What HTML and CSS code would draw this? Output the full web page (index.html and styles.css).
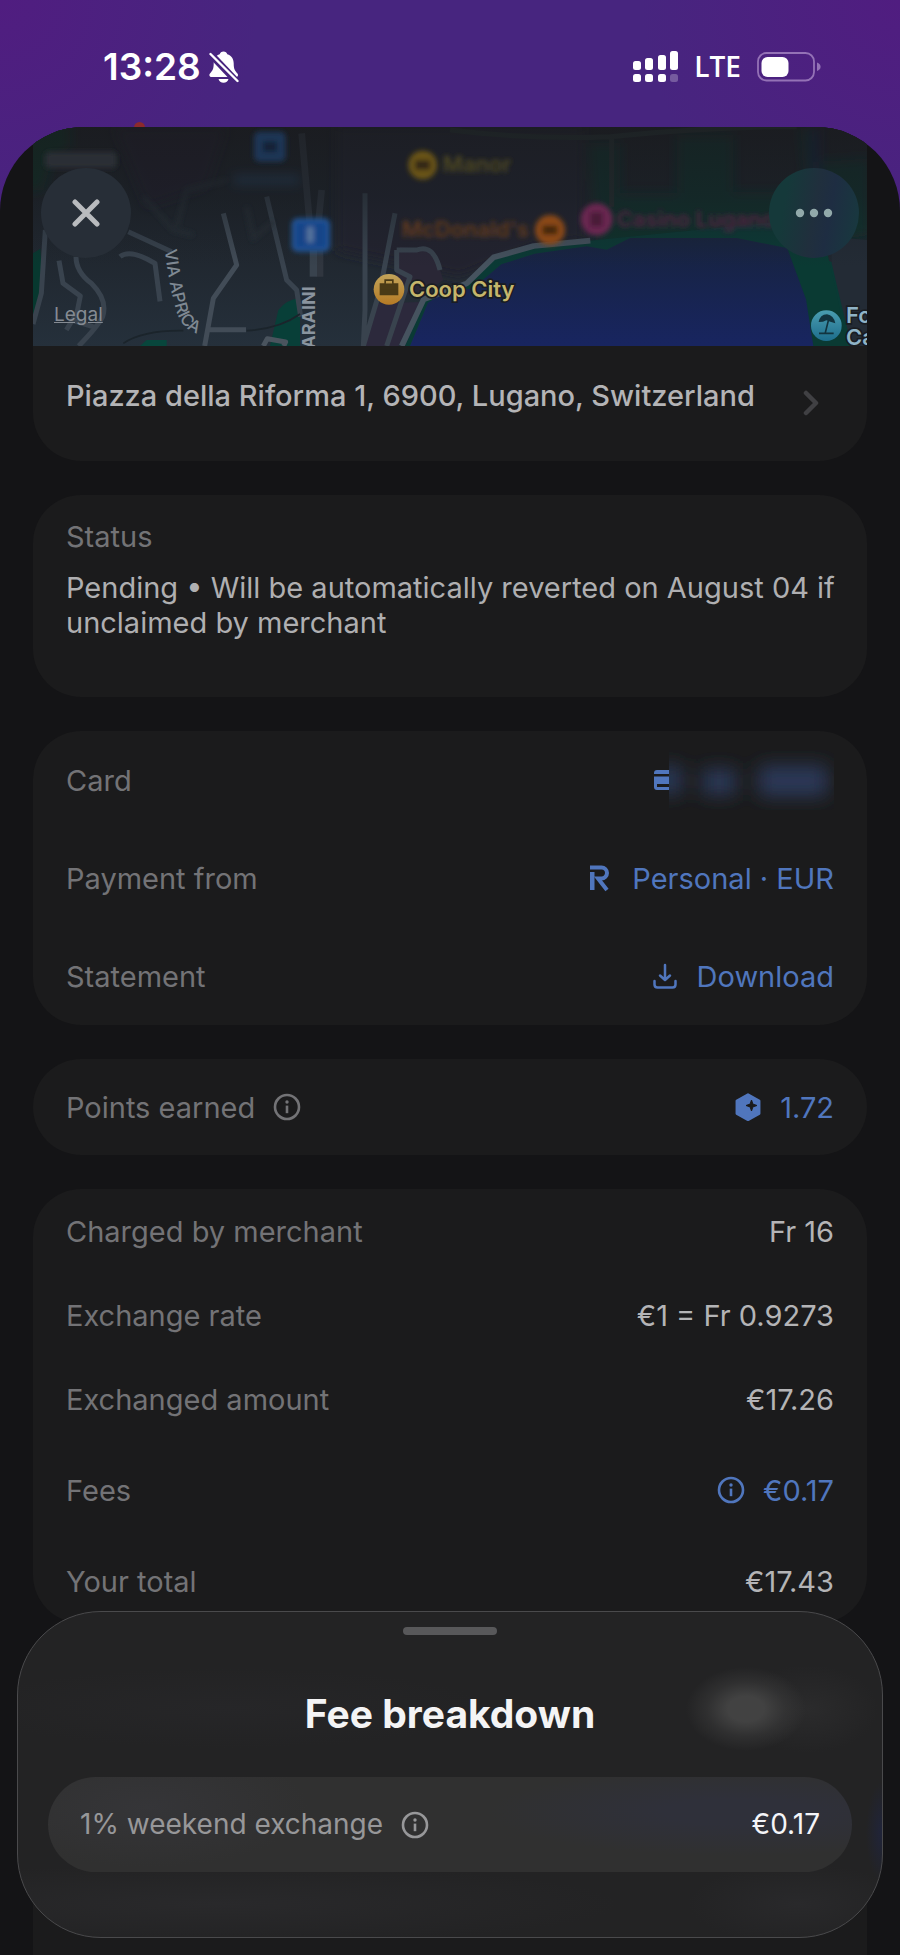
FILE: index.html
```html
<!DOCTYPE html>
<html lang="en">
<head>
	<meta charset="utf-8">
	<meta name="viewport" content="width=device-width, initial-scale=1">
	<title>Transaction details</title>
	<link rel="stylesheet" href="styles.css">
</head>
<body>
	<!-- Shared icons -->
	<svg class="defs" aria-hidden="true">
		<symbol id="info" viewBox="0 0 28 28">
			<circle cx="14" cy="14" r="12" fill="none" stroke="currentColor" stroke-width="2.6"/>
			<circle cx="14" cy="9" r="1.7" fill="currentColor"/>
			<path d="M14 12.6v7.6" stroke="currentColor" stroke-width="2.6"/>
		</symbol>
	</svg>

	<header class="statusbar">
		<div class="group time">
			<span>13:28</span>
			<svg width="30" height="32" viewBox="0 0 30 32" aria-hidden="true">
				<mask id="cut"><rect width="30" height="32" fill="#fff"/><path d="M0 1.5L28 31" stroke="#000" stroke-width="7"/></mask>
				<g fill="#fff" mask="url(#cut)">
					<path d="M14.5 0.5c2 0 3.4 1.2 3.8 2.8 4 1.2 6.4 4.6 6.4 9 0 6 1.3 7.5 3.3 9.7.9 1 1.2 1.7.9 2.7-.3.9-1 1.3-2.2 1.3H2.8c-1.3 0-2-.5-2.3-1.3-.3-1 0-1.7.9-2.7 2-2.2 3.3-3.7 3.3-9.7 0-4.4 2.2-7.8 6-9 .4-1.6 1.8-2.8 3.8-2.8z"/>
					<path d="M9.5 28h10c-.5 2.2-2.5 3.7-5 3.7s-4.5-1.500-5-3.700z"/>
				</g>
				<path d="M1.5 3L28.5 30" stroke="#fff" stroke-width="2.4" stroke-linecap="round"/>
			</svg>
		</div>
		<div class="group signal">
			<svg width="45" height="31" viewBox="0 0 45 31" fill="#fff" aria-hidden="true">
				<rect x="0" y="10" width="8" height="9" rx="2.5"/>
				<rect x="12" y="7" width="8" height="12" rx="2.5"/>
				<rect x="25" y="4" width="8" height="15" rx="2.5"/>
				<rect x="37" y="0" width="8" height="19" rx="2.5"/>
				<rect x="0" y="23" width="8" height="8" rx="2.5"/>
				<rect x="12" y="23" width="8" height="8" rx="2.5"/>
				<rect x="25" y="23" width="8" height="8" rx="2.5"/>
				<rect x="37" y="23" width="8" height="8" rx="2.5" opacity=".25"/>
			</svg>
			<span class="lte">LTE</span>
			<svg width="64" height="30" viewBox="0 0 64 30" aria-hidden="true">
				<rect x="1" y="1" width="56" height="27.5" rx="8.5" fill="none" stroke="#9472b6" stroke-width="1.8"/>
				<path d="M60 10.5c2.3.8 3.6 2.3 3.6 4.3s-1.3 3.5-3.6 4.3z" fill="#9472b6"/>
				<rect x="4.5" y="5" width="27" height="20" rx="6" fill="#fff"/>
			</svg>
		</div>
		<span class="recording"></span>
	</header>

	<main class="screen">
		<nav class="actions">
			<button type="button" class="round" aria-label="Close">
				<svg width="28" height="28" viewBox="0 0 28 28"><path d="M3 3l22 22M25 3L3 25" stroke="#b9bbbe" stroke-width="5" stroke-linecap="round"/></svg>
			</button>
			<button type="button" class="round green" aria-label="More">
				<svg width="38" height="10" viewBox="0 0 38 10" fill="#92a9aa"><circle cx="5" cy="5" r="4.2"/><circle cx="19" cy="5" r="4.2"/><circle cx="33" cy="5" r="4.2"/></svg>
			</button>
		</nav>

		<section class="card place">
			<div class="map">
				<svg class="mapart" viewBox="99 381 2502 657" preserveAspectRatio="xMidYMid slice" role="img" aria-label="Map of Lugano">
					<defs>
						<linearGradient id="land" x1="0" y1="0" x2="0" y2="1">
							<stop offset="0" stop-color="#1c1d22"/>
							<stop offset=".4" stop-color="#1e232a"/>
							<stop offset="1" stop-color="#25303b"/>
						</linearGradient>
						<linearGradient id="water" x1="0" y1="0" x2="0" y2="1">
							<stop offset="0" stop-color="#17233f"/>
							<stop offset="1" stop-color="#182560"/>
						</linearGradient>
						<linearGradient id="shade" x1="0" y1="0" x2="0" y2="1">
							<stop offset="0" stop-color="#1a1c20" stop-opacity=".7"/>
							<stop offset=".5" stop-color="#1a1f25" stop-opacity=".55"/>
							<stop offset="1" stop-color="#1e252d" stop-opacity="0"/>
						</linearGradient>
						<linearGradient id="gold" x1="0" y1="0" x2="0" y2="1">
							<stop offset="0" stop-color="#c2a45a"/>
							<stop offset="1" stop-color="#b57a25"/>
						</linearGradient>
						<linearGradient id="teal" x1="0" y1="0" x2="0" y2="1">
							<stop offset="0" stop-color="#4a9db0"/>
							<stop offset="1" stop-color="#1d6d8c"/>
						</linearGradient>
						<filter id="soft" x="-20%" y="-20%" width="140%" height="140%"><feGaussianBlur stdDeviation="8"/></filter>
						<filter id="softer" x="-20%" y="-20%" width="140%" height="140%"><feGaussianBlur stdDeviation="16"/></filter>
						<path id="aprica" d="M494 750Q508 860 528 930Q546 990 600 1003Q630 1006 690 1006"/>
					</defs>
					<rect x="99" y="381" width="2502" height="657" fill="url(#land)"/>

					<!-- Blurred upper part -->
					<g filter="url(#softer)">
						<path d="M60 340h150v100l-60 60-20 70H60z" fill="#0a3022"/>
						<path d="M340 381h340l-60 180-180 60z" fill="#221e29"/>
						<path d="M1010 381h740v340l-150 20-220 90-370-80z" fill="#24212d"/>
						<path d="M1765 430h95v150h170V405h170v170h220l-20-190h60v100l150-10v230l-260 40H1790z" fill="#0a322b"/>
						<path d="M2430 381h30v200h-25z" fill="#171f42"/>
						<rect x="700" y="525" width="200" height="28" fill="#26415d"/>
					</g>

					<!-- Parks -->
					<path d="M99 760l22-14 4 60-8 120-18 20z" fill="#07382f"/>
					<path d="M835 930q25-32 65-35v143h-90z" fill="#083f38"/>
					<path d="M420 1038l20-18h60v18z" fill="#08463c"/>
					<path d="M1135 910l150-5-90 133h-100z" fill="#2c293c"/>
					<path d="M1200 740l100 10 30 90-70 50-80-20z" fill="#2a2736"/>

					<!-- Lake -->
					<path d="M1215 1038l60-140 130-50 80-75 115-35 160-15 600-60 60 90 181 80v205z" fill="#0a3a35"/>
					<path d="M1230 1038l54-130 45-28 90-15 85-72 100-32 156-22 60 10 70-35h320l200 40 60 130 30 154z" fill="url(#water)"/>
					<path d="M2360 740l120 10 30 130 30 158h-100l-22-140z" fill="#0a3a33"/>
					<path d="M2495 790q30 130 60 248h46V720l-106-10z" fill="#232b35"/>

					<!-- Roads -->
					<g fill="none" stroke="#39434e" stroke-width="15" stroke-linejoin="round">
						<path d="M136 690l-12 190-25 92"/>
						<path d="M177 782l12 68 52 38-10 50-32 52"/>
						<path d="M228 770q0 45 46 80 50 50 34 100-15 30-72 88M215 960l70 22"/>
						<path d="M385 695l130 60M360 770q30-25 105 20l15 114"/>
						<path d="M670 640l40 155-70 100-26 143M620 989h118" stroke="#424c57"/>
						<path d="M800 590l60 250 30 30 12 80"/>
						<path d="M905 400l25 280M965 570l-10 100M960 750v80" stroke-width="20" stroke="#30363f"/>
						<path d="M940 750v80" stroke-width="22"/>
						<path d="M1095 580v350l-5 108M1185 640l-45 230-50 168M1190 750v60l40 20-70 208M1190 750h60q50-20 70 60"/>
						<path d="M1205 1038l66-140 130-48 80-78 120-34 170-16" stroke="#46535f" stroke-width="17"/>
						<path d="M790 1038l12-22 55 10-6 12" stroke="#4a545e"/>
						<path d="M1350 390q250 30 480 20 300-30 560-30M1835 410v210" stroke="#25302f"/>
					</g>
					<g fill="none" stroke="#272e36" stroke-width="12" filter="url(#soft)">
						<path d="M530 680l30-110 120-30M740 620l20 95 60-50M430 590l90 100 60 15"/>
					</g>
					<path d="M370 1030q60-40 180-38M740 992q100-6 160-50" fill="none" stroke="#1b242b" stroke-width="5"/>
					<rect x="99" y="381" width="2502" height="420" fill="url(#shade)"/>

					<!-- Blurred places -->
					<g filter="url(#soft)" class="place-name">
						<rect x="135" y="455" width="215" height="50" rx="14" fill="#2b2f35"/>
						<rect x="762" y="395" width="95" height="90" rx="16" fill="#1b3555"/>
						<rect x="790" y="425" width="40" height="30" fill="#142334"/>
						<circle cx="1268" cy="495" r="43" fill="#6b5513"/>
						<rect x="1245" y="480" width="46" height="30" fill="#302812"/>
						<text x="1328" y="516" fill="#504a20">Manor</text>
						<text x="1205" y="712" fill="#643a1d">McDonald's</text>
						<circle cx="1650" cy="690" r="45" fill="#8c4a17"/>
						<rect x="1627" y="676" width="46" height="28" fill="#422511"/>
						<circle cx="1790" cy="658" r="48" fill="#6b2751"/>
						<rect x="1770" y="636" width="38" height="44" fill="#481b38"/>
						<text x="1850" y="682" fill="#542442">Casino Lugano</text>
					</g>
					<g filter="url(#soft)"><rect x="875" y="655" width="115" height="100" rx="18" fill="#225699"/><rect x="886" y="666" width="93" height="78" rx="10" fill="#174589"/><rect x="921" y="680" width="20" height="48" fill="#56749c"/></g>

					<!-- Streets -->
					<text class="street" fill="#7f8993"><textPath href="#aprica">VIA APRICA</textPath></text>
					<text class="street bold" transform="translate(946 1046) rotate(-90)" fill="#8a949f">ARAINI</text>

					<!-- Places -->
					<g class="place-name near">
						<circle cx="1167" cy="868" r="46" fill="url(#gold)"/>
						<path d="M1141 852h52v18h-52zM1141 874h52v10h-52zM1155 850v-10h24v10" fill="#4a3a16" stroke="#4a3a16" stroke-width="4"/>
						<path d="M1158 850v-7h18v7z" fill="#b8954a"/>
						<text x="1227" y="892" fill="#c5b66c">Coop City</text>
						<circle cx="2479" cy="977" r="46" fill="url(#teal)"/>
						<path d="M2456 966q4-22 25-23 20 3 25 27l-15-5-12-4-10 4z" fill="#12343f"/>
						<path d="M2485 962l-9 36M2457 1000h44" stroke="#12343f" stroke-width="5"/>
						<text x="2538" y="968" fill="#8fb3c6">Fo</text>
						<text x="2538" y="1034" fill="#8fb3c6">Ca</text>
					</g>
				</svg>
				<a class="legal" href="#legal">Legal</a>
			</div>
			<a class="address" href="#place">
				<span>Piazza della Riforma 1, 6900, Lugano, Switzerland</span>
				<svg width="16" height="26" viewBox="0 0 16 26" aria-hidden="true"><path d="M3 3l10 10L3 23" fill="none" stroke="#404043" stroke-width="4.5" stroke-linecap="round" stroke-linejoin="round"/></svg>
			</a>
		</section>

		<section class="card state">
			<h3>Status</h3>
			<p>Pending • Will be automatically reverted on August 04 if unclaimed by merchant</p>
		</section>

		<section class="card">
			<div class="row tall">
				<span>Card</span>
				<a class="value" href="#card" aria-label="Card number hidden">
					<svg width="184" height="60" viewBox="0 0 184 60" aria-hidden="true">
						<defs>
							<filter id="haze" x="-50%" y="-100%" width="200%" height="300%"><feGaussianBlur stdDeviation="9"/></filter>
							<clipPath id="right"><path d="M19 0h165v60H19z"/></clipPath>
						</defs>
						<path d="M7 20h12v4H4v-1q0-3 3-3zM4 26.5h15V34H7v3h12v3H7q-3 0-3-3z" fill="#5076bd"/>
						<g clip-path="url(#right)"><g filter="url(#haze)" fill="#2a3857">
							<rect x="4" y="16" width="28" height="28"/>
							<rect x="52" y="19" width="34" height="26"/>
							<rect x="108" y="15" width="70" height="32" rx="8"/>
						</g></g>
					</svg>
				</a>
			</div>
			<div class="row tall">
				<span>Payment from</span>
				<a class="value" href="#account">
					<svg width="28" height="28" viewBox="0 0 28 28" aria-hidden="true">
						<path d="M4 8h4.5v18H4z" fill="currentColor"/>
						<path d="M4 3.5h11.500a5.500 5.500 0 0 1 0 11H12l9 11.500" fill="none" stroke="currentColor" stroke-width="4"/>
					</svg>
					Personal · EUR
				</a>
			</div>
			<div class="row tall">
				<span>Statement</span>
				<button type="button" class="value">
					<svg width="28" height="28" viewBox="0 0 28 28" fill="none" stroke="currentColor" stroke-width="2.5" stroke-linecap="round" stroke-linejoin="round" aria-hidden="true">
						<path d="M14 3v14.5M9 13.5l5 4.5 5-4.5M3.5 19v3.500q0 3 3 3h15q3 0 3-3V19"/>
					</svg>
					Download
				</button>
			</div>
		</section>

		<section class="card points">
			<div class="row">
				<span class="label">Points earned <svg class="icon"><use href="#info"/></svg></span>
				<a class="value" href="#points">
					<svg width="28" height="28" viewBox="0 0 28 28" aria-hidden="true">
						<path d="M14 1.5L25.2 7.8v12.8L14 26.8 2.8 20.6V7.800z" fill="currentColor" stroke="currentColor" stroke-width="2.5" stroke-linejoin="round"/>
						<path d="M17.5 7l1.4 4.1 4.1 1.4-4.1 1.4-1.4 4.100-1.400-4.100-4.100-1.400 4.100-1.400z" fill="#1b1b1c" stroke="#1b1b1c"/>
					</svg>
					1.72
				</a>
			</div>
		</section>

		<section class="card">
			<div class="row"><span>Charged by merchant</span><span class="amount">Fr 16</span></div>
			<div class="row"><span>Exchange rate</span><span class="amount">€1 = Fr 0.9273</span></div>
			<div class="row"><span>Exchanged amount</span><span class="amount">€17.26</span></div>
			<div class="row tall">
				<span>Fees</span>
				<button type="button" class="value"><svg class="icon"><use href="#info"/></svg> €0.17</button>
			</div>
			<div class="row"><span>Your total</span><span class="amount">€17.43</span></div>
		</section>

		<section class="card rest"></section>
	</main>

	<section class="sheet" role="dialog" aria-labelledby="sheet-title">
		<div class="handle"></div>
		<h2 id="sheet-title">Fee breakdown</h2>
		<div class="fee">
			<span class="label">1% weekend exchange <svg class="icon"><use href="#info"/></svg></span>
			<span class="amount">€0.17</span>
		</div>
	</section>
</body>
</html>
```
FILE: styles.css
```css
* {
	box-sizing: border-box;
}

body {
	margin: 0;
	min-height: 100vh;
	display: flex;
	flex-direction: column;
	font-family: Inter, "Noto Sans", sans-serif;
	font-optical-sizing: none;
	font-size: 29px;
	line-height: 35px;
	color: #737376;
	background: radial-gradient(circle at 0 0, #501d80, transparent 260px),
		radial-gradient(circle at 100% 0, #501d80, transparent 260px),
		#47257f;
}

a {
	color: inherit;
	text-decoration: none;
}

button {
	padding: 0;
	border: 0;
	background: none;
	font: inherit;
	color: inherit;
}

svg {
	display: block;
	flex: none;
}

.defs {
	position: absolute;
	width: 0;
	height: 0;
}

/* Phone status bar */
.statusbar {
	position: relative;
	height: 127px;
	padding: 6px 79px 0 103px;
	display: flex;
	align-items: center;
	justify-content: space-between;
	color: #fff;
}

.group {
	display: flex;
	align-items: center;
}

.time {
	gap: 8px;
	font-size: 37px;
	font-weight: 600;
}

.signal {
	gap: 16px;
}

.lte {
	font-family: "Open Sans", sans-serif;
	font-size: 28px;
	font-weight: 600;
}

.recording {
	position: absolute;
	left: 134px;
	bottom: -6px;
	width: 11px;
	height: 11px;
	border-radius: 50%;
	background: #8c2a2c;
}

/* Transaction screen */
.screen {
	position: relative;
	flex: 1;
	display: flex;
	flex-direction: column;
	gap: 34px;
	padding: 0 33px;
	border-radius: 84px 84px 0 0;
	overflow: hidden;
	background: #141416;
}

.actions {
	position: absolute;
	z-index: 1;
	top: 41px;
	left: 41px;
	right: 41px;
	display: flex;
	justify-content: space-between;
}

.round {
	width: 90px;
	height: 90px;
	border-radius: 50%;
	display: flex;
	align-items: center;
	justify-content: center;
	background: #272e37;
}

.round.green {
	background: linear-gradient(100deg, #15393a 20%, #202f3d 50%, #1e2d42 65%, #173a3e);
}

.card {
	border-radius: 48px;
	background: #1b1b1c;
}

.place {
	border-radius: 0 0 48px 48px;
}

.map {
	position: relative;
	height: 219px;
}

.mapart {
	width: 100%;
	height: 100%;
}

.place-name {
	font-size: 66px;
	font-weight: 600;
}

.near text {
	paint-order: stroke;
	stroke: #1a1d22;
	stroke-width: 10px;
}

.street {
	font-size: 50px;
	font-weight: 500;
}

.street.bold {
	font-size: 54px;
	font-weight: 700;
}

.legal {
	position: absolute;
	left: 21px;
	bottom: 19px;
	font-size: 19px;
	line-height: 24px;
	color: #858b93;
	text-decoration: underline;
}

.address {
	display: flex;
	justify-content: space-between;
	padding: 32px 48px 45px 33px;
	font-weight: 500;
	color: #b4b4b6;
}

.address svg {
	margin-top: 12px;
}

.state {
	padding: 24px 24px 57px 33px;
}

.state h3 {
	margin: 0 0 16px;
	font-size: 29px;
	font-weight: 400;
}

.state p {
	margin: 0;
	color: #afafb1;
}

.row {
	height: 84px;
	padding: 0 33px;
	display: flex;
	align-items: center;
	justify-content: space-between;
}

.row.tall {
	height: 98px;
}

.points .row {
	height: 96px;
}

.label,
.value {
	display: flex;
	align-items: center;
	gap: 18px;
}

.value {
	color: #5076bd;
}

.amount {
	color: #b4b4b6;
}

.icon {
	width: 28px;
	height: 28px;
}

.rest {
	flex: 1;
	border-radius: 48px 48px 0 0;
}

.sheet {
	position: fixed;
	left: 17px;
	right: 17px;
	bottom: 17px;
	padding: 15px 30px 65px;
	border: 1px solid #4a4a4c;
	border-radius: 84px;
	background: radial-gradient(ellipse 60px 42px at 728px 97px, #424242 30%, rgba(66, 66, 66, .4) 65%, transparent),
		radial-gradient(ellipse 70px 44px at 790px 97px, #2b2b2c, transparent),
		radial-gradient(ellipse 260px 40px at 210px 96px, #262628, transparent),
		radial-gradient(ellipse 400px 40px at 200px 292px, #29292b, transparent),
		radial-gradient(ellipse 110px 40px at 780px 292px, #29292b, transparent),
		radial-gradient(ellipse 16px 50px at 864px 220px, #20243a, transparent),
		#232324;
}

.handle {
	width: 94px;
	height: 8px;
	margin: 0 auto;
	border-radius: 4px;
	background: #58585a;
}

.sheet h2 {
	margin: 55px 0 39px;
	font-size: 39px;
	line-height: 48px;
	font-weight: 700;
	text-align: center;
	color: #f4f4f5;
}

.fee {
	height: 95px;
	padding: 0 32px;
	display: flex;
	align-items: center;
	justify-content: space-between;
	border-radius: 48px;
	font-size: 28px;
	color: #979799;
	background: radial-gradient(ellipse 250px 44px at 690px 35px, #2f303a 30%, transparent),
		radial-gradient(ellipse 160px 60px at 100px 30px, #353538, transparent),
		#303030;
}

.fee .amount {
	color: #f4f4f8;
}
```
